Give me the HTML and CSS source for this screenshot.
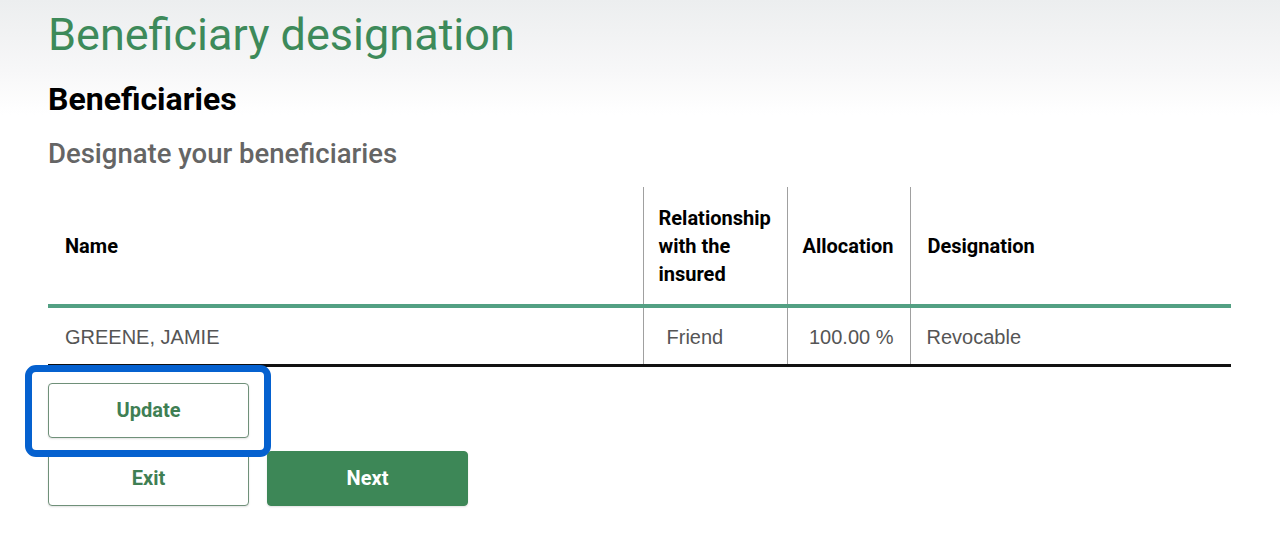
FILE: index.html
```html
<!DOCTYPE html>
<html lang="en">
<head>
<meta charset="utf-8">
<title>Beneficiary designation</title>
<link rel="stylesheet" href="styles.css">
</head>
<body>
<main class="page">
  <h1 class="title">Beneficiary designation</h1>
  <h2 class="section">Beneficiaries</h2>
  <h3 class="subtitle">Designate your beneficiaries</h3>
  <table class="benef">
    <colgroup>
      <col class="w-name">
      <col class="w-rel">
      <col class="w-alloc">
      <col class="w-des">
    </colgroup>
    <thead>
      <tr>
        <th class="c-name">Name</th>
        <th class="c-rel">Relationship<br>with the<br>insured</th>
        <th class="c-alloc">Allocation</th>
        <th class="c-des">Designation</th>
      </tr>
    </thead>
    <tbody>
      <tr>
        <td class="c-name">GREENE, JAMIE</td>
        <td class="c-rel rel-val">Friend</td>
        <td class="c-alloc alloc-val">100.00 %</td>
        <td class="c-des">Revocable</td>
      </tr>
    </tbody>
  </table>
  <div class="actions">
    <div class="row">
      <button class="btn btn-outline btn-focus" type="button">Update</button>
    </div>
    <div class="row">
      <button class="btn btn-outline" type="button">Exit</button>
      <button class="btn btn-primary" type="button">Next</button>
    </div>
  </div>
</main>
</body>
</html>
```

FILE: styles.css
```css
html, body {
  margin: 0;
  padding: 0;
}
body {
  background: linear-gradient(to bottom, #eceeef 0px, #f7f7f8 70px, #ffffff 115px, #ffffff 100%);
  background-repeat: no-repeat;
  min-height: 548px;
  font-family: Roboto, "Liberation Sans", Arial, sans-serif;
  color: #000;
}
.page {
  padding: 9px 49px 0 48px;
}
.title {
  margin: 0;
  font-size: 45px;
  line-height: 52px;
  font-weight: 400;
  color: #3d8a5a;
}
.section {
  margin: 20px 0 0;
  font-size: 32px;
  line-height: 36px;
  font-weight: 700;
  color: #000;
}
.subtitle {
  margin: 21px 0 0;
  font-size: 27.5px;
  line-height: 32px;
  font-weight: 500;
  color: #656565;
}
.benef {
  margin-top: 17px;
  width: 1183px;
  border-collapse: collapse;
  table-layout: fixed;
}
.w-name { width: 595px; }
.w-rel { width: 144px; }
.w-alloc { width: 123px; }
.benef th,
.benef td {
  box-sizing: border-box;
}
.benef th {
  height: 119px;
  padding: 0 6px 0 17px;
  text-align: left;
  vertical-align: middle;
  font-family: Roboto, "Liberation Sans", sans-serif;
  font-weight: 700;
  font-size: 20px;
  line-height: 28px;
  color: #000;
  border-bottom: 4px solid #53a083;
}
.benef td {
  height: 59px;
  padding: 3px 10px 0 17px;
  vertical-align: middle;
  font-family: "Liberation Sans", Arial, sans-serif;
  font-size: 20px;
  color: #555;
  border-bottom: 3px solid #111;
}
.benef .c-rel,
.benef .c-alloc,
.benef .c-des { border-left: 1px solid #a0a0a0; }
.benef th.c-rel { padding-left: 15px; }
.benef th.c-alloc { padding-left: 15px; }
.benef td.rel-val { padding-left: 23px; }
.benef td.alloc-val { text-align: right; padding-right: 16px; }
.benef td.c-des { padding-left: 16px; }

.actions {
  margin-top: 16px;
  display: flex;
  flex-direction: column;
  gap: 13px;
}
.row {
  display: flex;
  gap: 18px;
}
.btn {
  width: 201px;
  height: 55px;
  border-radius: 4px;
  font-family: Roboto, "Liberation Sans", sans-serif;
  font-size: 20px;
  font-weight: 700;
  cursor: pointer;
  padding: 0;
}
.btn-outline {
  background: #fff;
  border: 1px solid #6f9079;
  color: #3f7f54;
  box-shadow: 0 1px 2px rgba(0, 0, 0, 0.12);
}
.btn-primary {
  background: #3d8757;
  border: 1px solid #3d8757;
  color: #fff;
  box-shadow: 0 1px 2px rgba(0, 0, 0, 0.12);
}
.btn-focus {
  position: relative;
}
.btn-focus::after {
  content: "";
  position: absolute;
  top: -19px;
  left: -24px;
  right: -23px;
  bottom: -20px;
  border: 7px solid #0561cf;
  border-radius: 11px;
  pointer-events: none;
}
```
